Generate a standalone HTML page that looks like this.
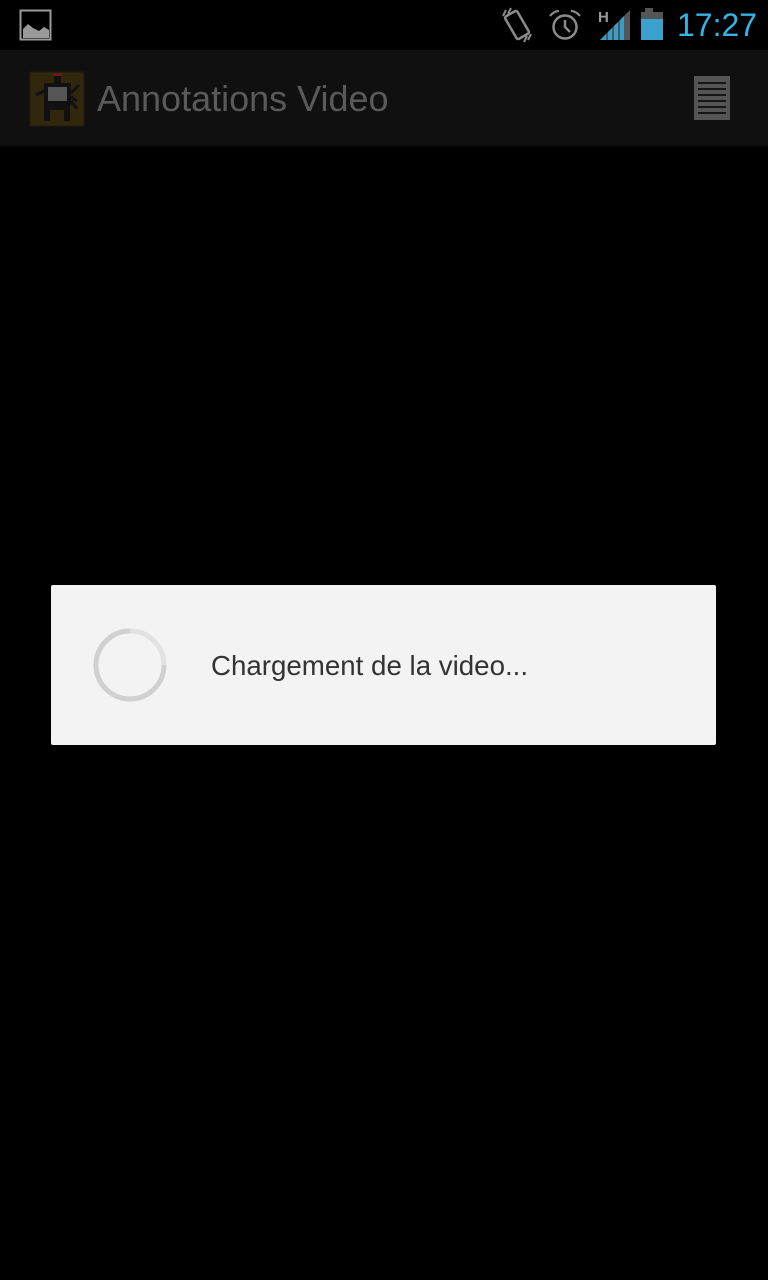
<!DOCTYPE html>
<html><head><meta charset="utf-8"><style>
html,body{margin:0;padding:0;background:#000;width:768px;height:1280px;overflow:hidden;font-family:"Liberation Sans",sans-serif}
.abs{position:absolute}
</style></head><body>
<div class="abs" style="left:0;top:0;width:768px;height:50px;background:#000"></div>
<svg class="abs" style="left:18px;top:8px" width="36" height="34" viewBox="0 0 36 34">
<rect x="2.5" y="2.5" width="30" height="29" fill="none" stroke="#9a9a9a" stroke-width="2"/>
<path d="M5 30 V21 L10 16 L15 20 L21 23 L26 19 L31 22 V30 Z" fill="#9a9a9a"/>
</svg>
<svg class="abs" style="left:500px;top:6px" width="36" height="38" viewBox="0 0 36 38">
<rect x="10" y="6" width="14" height="26" rx="2" transform="rotate(-30 17 19)" fill="none" stroke="#8a8a8a" stroke-width="2.5"/>
<path d="M6 4 L3 10 M11 2 L8 8 M27 30 L24 36 M31 28 L28 34" stroke="#8a8a8a" stroke-width="2"/>
</svg>
<svg class="abs" style="left:548px;top:8px" width="34" height="34" viewBox="0 0 34 34">
<circle cx="17" cy="19" r="11.5" fill="none" stroke="#8a8a8a" stroke-width="2.5"/>
<path d="M17 12 V19 L22 24" fill="none" stroke="#8a8a8a" stroke-width="2.5"/>
<path d="M2 8 Q6 3 11 3 M32 8 Q28 3 23 3" fill="none" stroke="#8a8a8a" stroke-width="2.2"/>
</svg>
<svg class="abs" style="left:598px;top:8px" width="34" height="34" viewBox="0 0 34 34">
<text x="0" y="14" font-family="Liberation Sans" font-weight="bold" font-size="15" fill="#9a9a9a">H</text>
<path d="M2 32 L32 2 V32 Z" fill="#555"/>
<path d="M2 32 L8 26 V32 Z M10 32 V24 L14 20 V32 Z M16 32 V18 L20 14 V32 Z M22 32 V12 L26 8 V32 Z" fill="#33a0cc"/>
</svg>
<div class="abs" style="left:645px;top:8px;width:8px;height:4px;background:#555"></div>
<div class="abs" style="left:641px;top:12px;width:22px;height:28px;background:#555"></div>
<div class="abs" style="left:641px;top:19px;width:22px;height:21px;background:#3aa0cc"></div>
<div class="abs" style="left:677px;top:5px;font-size:32px;color:#33b5e5;line-height:40px">17:27</div>
<div class="abs" style="left:0;top:50px;width:768px;height:96px;background:#101010"></div>
<div class="abs" style="left:0;top:145px;width:768px;height:2px;background:#080808"></div>
<svg class="abs" style="left:29px;top:71px" width="56" height="56" viewBox="0 0 56 56">
<rect x="1" y="1" width="54" height="54" fill="#30270d" stroke="#1e1a0a" stroke-width="1"/>
<rect x="24" y="2" width="9" height="3" fill="#6a1818"/>
<rect x="25" y="5" width="7" height="8" fill="#111"/>
<rect x="15" y="12" width="27" height="22" fill="#111"/>
<rect x="19" y="16" width="19" height="14" fill="#555"/>
<rect x="15" y="34" width="6" height="16" fill="#111"/>
<rect x="35" y="34" width="6" height="16" fill="#111"/>
<rect x="21" y="34" width="14" height="5" fill="#111"/>
<path d="M15 20 L7 24 M42 22 L50 14 M42 26 L48 30 M42 30 L48 38" stroke="#111" stroke-width="3"/>
</svg>
<div class="abs" style="left:97px;top:77px;font-size:36px;color:#5a5a5a;line-height:44px">Annotations Video</div>
<svg class="abs" style="left:694px;top:76px" width="36" height="44" viewBox="0 0 36 44">
<rect x="0" y="0" width="36" height="44" fill="#555"/>
<path d="M4 7 H32 M4 13 H32 M4 19 H32 M4 25 H32 M4 31 H32 M4 37 H32" stroke="#161616" stroke-width="2"/>
</svg>
<div class="abs" style="left:51px;top:585px;width:665px;height:160px;background:#f3f3f3;border-radius:2px"></div>
<svg class="abs" style="left:90px;top:625px" width="80" height="80" viewBox="0 0 80 80">
<circle cx="40" cy="40" r="34" fill="none" stroke="#e2e2e2" stroke-width="5"/>
<path d="M74 40 A34 34 0 1 1 40 6" fill="none" stroke="#d0d0d0" stroke-width="5"/>
</svg>
<div class="abs" style="left:211px;top:649px;font-size:27.7px;color:#333;line-height:34px">Chargement de la video...</div>
</body></html>
